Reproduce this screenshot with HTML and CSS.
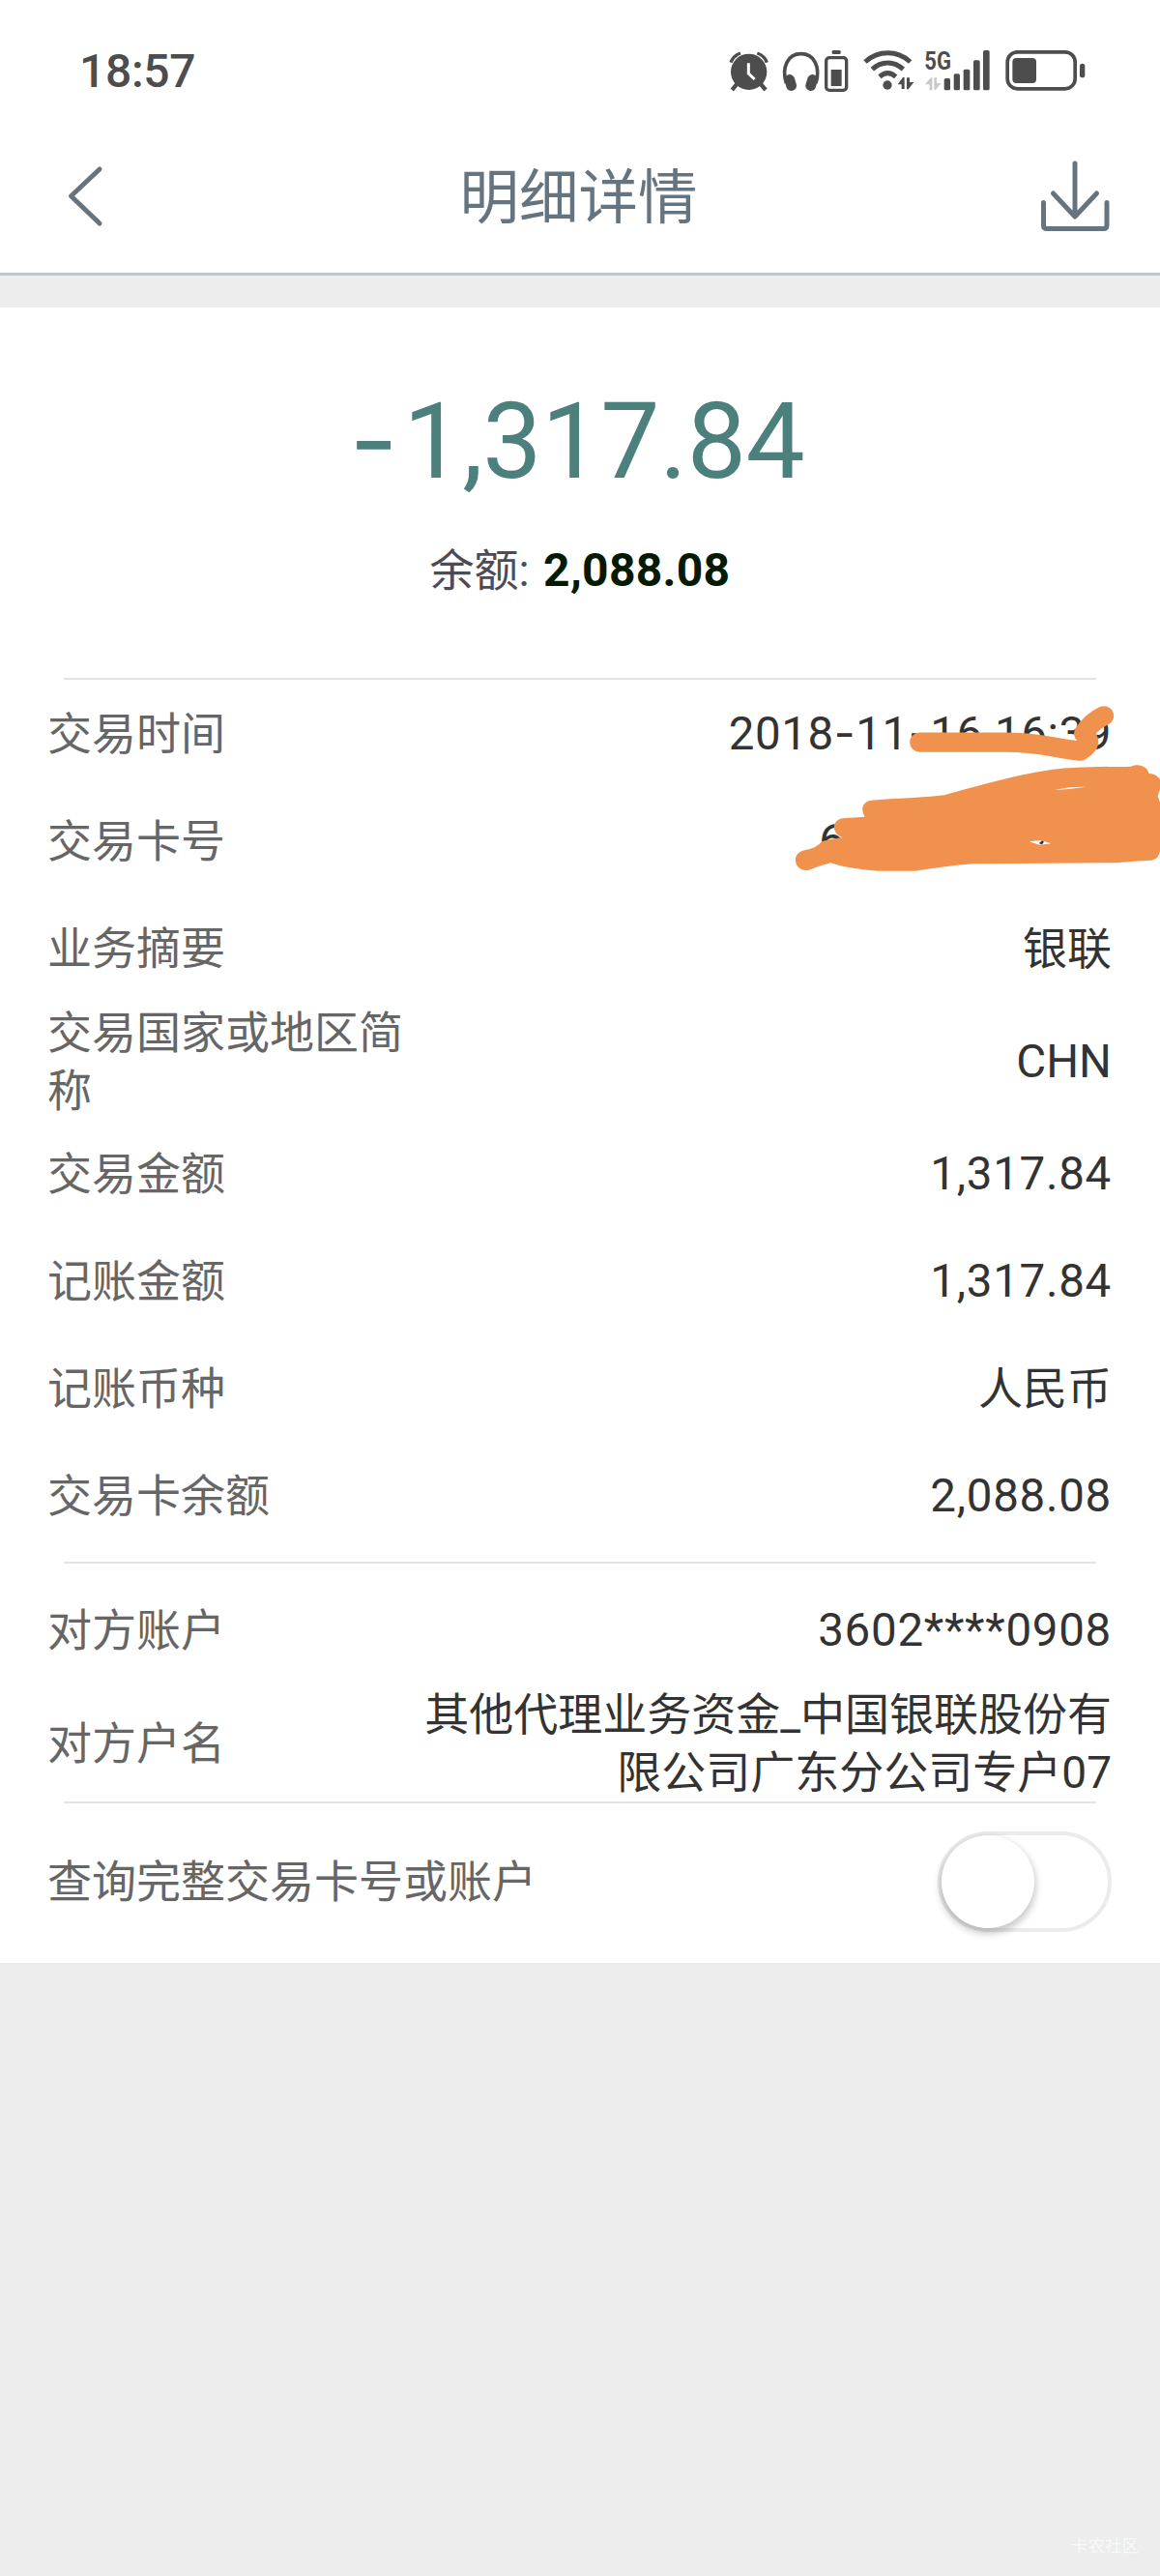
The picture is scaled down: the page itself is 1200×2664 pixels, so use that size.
FILE: index.html
```html
<!DOCTYPE html>
<html lang="zh-CN">
<head>
<meta charset="utf-8">
<title>明细详情</title>
<link rel="stylesheet" href="styles.css">
</head>
<body>
<div class="status">
  <span class="clock">18:57</span>
  <div class="status-icons">
    <svg class="i-alarm" width="41.33" height="47" viewBox="42 60 124 141" fill="#4d4d4d">
      <circle cx="104" cy="133" r="56"/>
      <path d="M48 104a48 48 0 0 1 30-29M160 104a48 48 0 0 0-30-29" fill="none" stroke="#4d4d4d" stroke-width="10"/>
      <path d="M66 172l-10 12M142 172l10 12" stroke="#4d4d4d" stroke-width="13" stroke-linecap="square"/>
      <path d="M103 106v32l19 18" fill="none" stroke="#fff" stroke-width="9"/>
    </svg>
    <svg class="i-head" width="69.33" height="47" viewBox="208 60 208 141" fill="#4d4d4d">
      <path d="M221 168C206 118 226 77 267 77S328 118 313 168" fill="none" stroke="#4d4d4d" stroke-width="11"/>
      <rect x="218" y="141" width="32" height="51" rx="15" transform="rotate(-17 234 166)"/>
      <rect x="284" y="141" width="32" height="51" rx="15" transform="rotate(17 300 166)"/>
      <rect x="363" y="66" width="27" height="12" rx="4"/>
      <rect x="345" y="89" width="63" height="101" rx="10" fill="none" stroke="#4d4d4d" stroke-width="10"/>
      <rect x="360" y="126" width="33" height="51"/>
    </svg>
    <svg class="i-wifi" width="52.67" height="47" viewBox="458 60 158 141" fill="none" stroke="#4d4d4d" stroke-width="15">
      <path d="M464 102c40-37 100-37 140 0M486 125c28-27 68-27 96 0M509 148c16-14 34-14 50 0"/>
      <circle cx="533" cy="174" r="14" fill="#4d4d4d" stroke="none"/>
      <path d="M565 172l16-22h5v36h-9v-14zM615 165l-17 22h-5v-36h9v14z" fill="#4d4d4d" stroke="none"/>
    </svg>
    <svg class="i-signal" width="68" height="47" viewBox="648 60 204 141" fill="#4d4d4d">
      <text x="649" y="125" class="net" textLength="83" lengthAdjust="spacingAndGlyphs">5G</text>
      <path d="M651 172l18-21h4v39h-8v-18zM701 168l-18 21h-4v-38h8v17z" fill="#c8c8c8"/>
      <rect x="710" y="153" width="19" height="37" rx="5"/><rect x="740" y="139" width="19" height="51" rx="5"/>
      <rect x="770" y="125" width="20" height="65" rx="5"/><rect x="801" y="97" width="20" height="93" rx="5"/>
      <rect x="831" y="66" width="20" height="124" rx="5"/>
    </svg>
    <svg class="i-batt" width="83" height="47" viewBox="900 60 249 141" fill="#4d4d4d">
      <rect x="906.500" y="71.500" width="210" height="114" rx="31" fill="none" stroke="#4d4d4d" stroke-width="11"/>
      <rect x="922" y="90" width="74" height="78" rx="12"/><rect x="1131" y="107" width="16" height="44" rx="8"/>
    </svg>
  </div>
</div>
<header class="header">
  <svg width="60" height="80" viewBox="60 163 60 80" fill="none" stroke="#667480" stroke-width="5" stroke-linecap="round" stroke-linejoin="round"><path d="M103 175L73.500 202.800 103 231"/></svg>
  <h1>明细详情</h1>
  <svg width="76" height="80" viewBox="1074 163 76 80" fill="none" stroke="#667480" stroke-width="5" stroke-linecap="round" stroke-linejoin="round"><path d="M1112 169v53M1089.500 200l22.500 24 22.500-24M1079.500 209.500V233q0 3.500 3.500 3.500h58.500q3.500 0 3.500-3.500v-23.500"/></svg>
</header>
<main class="card">
  <section class="summary">
    <div class="amount"><span class="dash">-</span>1,317.84</div>
    <div class="balance">余额: <b>2,088.08</b></div>
  </section>
  <section class="group first">
    <div class="row"><span class="label">交易时间</span><span class="value date">2018<span class="dash">-</span>11<span class="dash">-</span>16 16:39</span></div>
    <div class="row"><span class="label">交易卡号</span><span class="value cardno">6</span></div>
    <div class="row"><span class="label">业务摘要</span><span class="value">银联</span></div>
    <div class="row tall"><span class="label">交易国家或地区简称</span><span class="value chn">CHN</span></div>
    <div class="row"><span class="label">交易金额</span><span class="value num">1,317.84</span></div>
    <div class="row"><span class="label">记账金额</span><span class="value num">1,317.84</span></div>
    <div class="row"><span class="label">记账币种</span><span class="value">人民币</span></div>
    <div class="row"><span class="label">交易卡余额</span><span class="value num">2,088.08</span></div>
    <svg class="scribble" width="480" height="240" viewBox="0 0 1440 720">
      <g fill="none" stroke="#f0924d" stroke-linecap="round" stroke-linejoin="round">
        <path d="M694 263H960C1060 263 1110 280 1192 290C1235 265 1215 250 1204 236Q1225 200 1266 181" stroke-width="61"/>
      </g>
      <path d="M340 597Q373 592 392 570Q420 562 454 558C420 546 420 505 455 499L524 494C508 468 520 445 545 443C640 436 720 434 770 427C850 405 1050 345 1170 342C1250 337 1300 340 1350 338C1378 326 1402 342 1405 359Q1428 360 1440 378V408L1433 430 1440 450V600Q1436 625 1414 629C1350 632 1310 637 1290 637L860 640C790 645 730 655 680 662H565C500 658 450 648 418 637Q385 646 350 659C320 665 306 642 309 622Q315 600 340 597Z" fill="#f0924d"/>
      <path d="M1110 411Q1160 400 1210 401Q1160 409 1110 411ZM1034 571L1068 567 1102 577 1066 581Z" fill="#fff"/>
      <path d="M1064 577L1074 568 1080 572 1074 580Z" fill="#333"/>
    </svg>
  </section>
  <section class="group second">
    <div class="row"><span class="label">对方账户</span><span class="value acct">3602****0908</span></div>
    <div class="row tall"><span class="label">对方户名</span><span class="value">其他代理业务资金_中国银联股份有限公司广东分公司专户07</span></div>
  </section>
  <section class="group third">
    <div class="row"><span class="label wide">查询完整交易卡号或账户</span><span class="toggle"><i class="knob"></i></span></div>
  </section>
</main>
<footer class="mark">卡农社区</footer>
</body>
</html>
```
FILE: styles.css
```css
* { box-sizing: border-box; }
body {
  margin: 0;
  width: 1200px;
  height: 2664px;
  display: flex;
  flex-direction: column;
  background: #ededed;
  color: #333;
  font: 46px/60px Roboto, "Noto Sans CJK SC", sans-serif;
}
svg { display: block; flex: none; overflow: visible; }
.status {
  height: 142px;
  padding: 50px 77px 0 82px;
  display: flex;
  justify-content: space-between;
  align-items: flex-start;
  background: #fff;
}
.clock {
  font-size: 48px;
  line-height: 48px;
  font-weight: 500;
  letter-spacing: -0.3px;
  color: #4d4d4d;
}
.status-icons { display: flex; }
.i-head, .i-wifi { margin-left: 14px; }
.i-signal { margin-left: 10.67px; }
.i-batt { margin-left: 16px; }
.net { font: 700 80px Roboto, sans-serif; }
.header {
  height: 143px;
  padding: 0 50px 19px 60px;
  display: flex;
  align-items: center;
  justify-content: space-between;
  background: #fff;
  border-bottom: 3px solid #c0c6cb;
}
.header h1 {
  margin: 0;
  padding: 5px 0 0 3px;
  font-size: 61.5px;
  font-weight: 400;
  color: #667480;
}
.card {
  margin-top: 33px;
  height: 1712px;
  background: #fff;
}
.summary {
  height: 383px;
  padding-top: 74px;
  display: flex;
  flex-direction: column;
  align-items: center;
}
.amount {
  font-size: 109px;
  line-height: 124px;
  letter-spacing: -0.3px;
  color: #4c807d;
}
.dash { font-family: Inter, sans-serif; }
.amount .dash { margin: 0 6px 0 -6px; }
.balance {
  margin-top: 41px;
  color: #4c4c55;
}
.balance b {
  margin-left: 3px;
  font-size: 48px;
  letter-spacing: 0.3px;
  color: #051a02;
}
.group { position: relative; }
.group::before {
  content: "";
  display: block;
  height: 2px;
  margin: 0 66px;
  background: #e3e3e3;
}
.row {
  height: 111px;
  padding: 0 50px 0 49px;
  display: flex;
  align-items: center;
  justify-content: space-between;
}
.tall { height: 122px; padding-top: 2px; }
.label { width: 375px; color: #666; }
.wide { width: auto; }
.value { max-width: 719px; text-align: right; }
.date, .cardno, .num, .acct, .chn { font-size: 47.5px; }
.date { letter-spacing: 0.55px; }
.num, .acct { letter-spacing: 0.7px; }
.cardno { width: 303px; text-align: left; }
.second { margin-top: 13px; }
.second::before { margin-bottom: 13px; }
.third .row { height: 164px; padding-bottom: 3px; }
.scribble {
  position: absolute;
  right: 0;
  top: -21px;
}
.toggle {
  width: 180px;
  height: 104px;
  border: 4px solid #ebebeb;
  border-radius: 52px;
}
.knob {
  display: block;
  width: 96px;
  height: 96px;
  border-radius: 50%;
  background: #fff;
  box-shadow: 0 4px 7px 2px #0003;
}
.mark {
  margin-top: auto;
  padding: 0 22px 19px;
  text-align: right;
  font-size: 17.5px;
  line-height: 24px;
  color: #f9f9f9;
}
```
